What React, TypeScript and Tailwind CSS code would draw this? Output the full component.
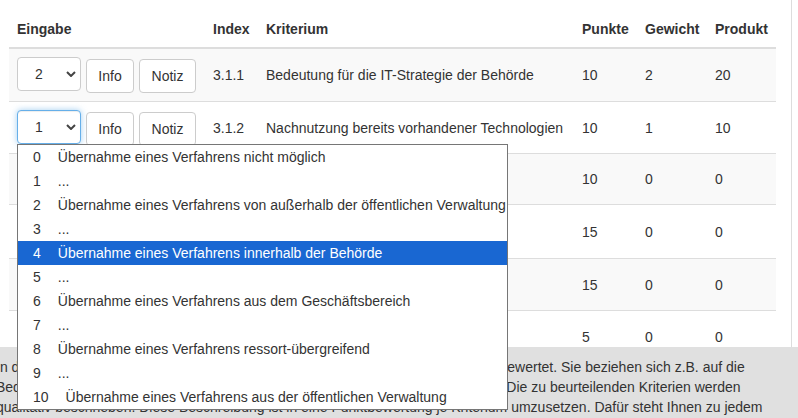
type Row = {
  value: number;
  index: string;
  label: string;
  points: number;
  height: string;
};

const rows: Row[] = [
  { value: 2, index: "3.1.1", label: "Bedeutung für die IT-Strategie der Behörde", points: 10, height: "h-[52px]" },
  { value: 1, index: "3.1.2", label: "Nachnutzung bereits vorhandener Technologien", points: 10, height: "h-[52px]" },
  { value: 0, index: "3.1.3", label: "Nachnutzbarkeit des Verfahrens", points: 10, height: "h-[51px]" },
  { value: 0, index: "3.1.4", label: "Verwendung offener Standards", points: 15, height: "h-[54px]" },
  { value: 0, index: "3.1.5", label: "Offene Schnittstellen", points: 15, height: "h-[52px]" },
  { value: 0, index: "3.1.6", label: "Interoperabilität", points: 5, height: "h-[52px]" },
];

const options = [
  "Übernahme eines Verfahrens nicht möglich",
  "...",
  "Übernahme eines Verfahrens von außerhalb der öffentlichen Verwaltung",
  "...",
  "Übernahme eines Verfahrens innerhalb der Behörde",
  "...",
  "Übernahme eines Verfahrens aus dem Geschäftsbereich",
  "...",
  "Übernahme eines Verfahrens ressort-übergreifend",
  "...",
  "Übernahme eines Verfahrens aus der öffentlichen Verwaltung",
];

const cols = "grid grid-cols-[196px_53px_316px_63px_70px_69px] items-center";

function Chevron() {
  return (
    <svg width="10" height="6" viewBox="0 0 10 6" className="shrink-0">
      <polyline points="1,1 5,5 9,1" fill="none" stroke="#444" strokeWidth="2" />
    </svg>
  );
}

function ValueSelect({ value, open }: { value: number; open?: boolean }) {
  return (
    <div className="relative">
      <div
        className={
          open
            ? "flex h-[34px] w-[64px] items-center justify-between rounded-[4px] border border-[#66afe9] bg-white pl-[17px] pr-[4px] shadow-[inset_0_1px_1px_rgba(0,0,0,0.075),0_0_6px_rgba(102,175,233,0.6)]"
            : "flex h-[34px] w-[64px] items-center justify-between rounded-[4px] border border-[#ccc] bg-white pl-[17px] pr-[4px]"
        }
      >
        <span>{value}</span>
        <Chevron />
      </div>
      {open && (
        <ul className="absolute left-0 top-[34px] z-20 w-[491px] border border-[#767676] bg-white">
          {options.map((text, i) => (
            <li
              key={i}
              className={
                i === 4
                  ? "flex h-[24px] items-center bg-[#1967d2] pl-[15px] text-white"
                  : "flex h-[24px] items-center pl-[15px] text-[#333]"
              }
            >
              <span>{i}</span>
              <span className="ml-[17px] whitespace-nowrap">{text}</span>
            </li>
          ))}
        </ul>
      )}
    </div>
  );
}

export default function App() {
  return (
    <div className="flex h-screen w-[798px] flex-col overflow-hidden bg-white font-['Liberation_Sans',Arial,sans-serif] text-[14px] leading-[20px] text-[#333]">
      {/* Kriterien table */}
      <div className="h-[347px] w-[792px] shrink-0 border-r border-[#ddd] pl-[9px] pr-[15px] pt-[11px]">
        <div className={`${cols} h-[38px] border-b-2 border-[#ddd] font-bold`}>
          <div className="px-[8px]">Eingabe</div>
          <div className="px-[8px]">Index</div>
          <div className="px-[8px]">Kriterium</div>
          <div className="px-[8px]">Punkte</div>
          <div className="px-[8px]">Gewicht</div>
          <div className="px-[8px]">Produkt</div>
        </div>
        {rows.map((row, i) => (
          <div
            key={row.index}
            className={`${cols} ${row.height} ${i > 0 ? "border-t border-[#ddd]" : ""} ${i % 2 === 0 ? "bg-[#f9f9f9]" : "bg-white"}`}
          >
            <div className="flex items-start gap-[5px] px-[8px]">
              <ValueSelect value={row.value} open={i === 1} />
              <button className="mt-[2px] flex h-[34px] w-[48px] items-center justify-center rounded-[4px] border border-[#ccc] bg-white">
                Info
              </button>
              <button className="mt-[2px] flex h-[34px] w-[57px] items-center justify-center rounded-[4px] border border-[#ccc] bg-white">
                Notiz
              </button>
            </div>
            <div className="px-[8px]">{row.index}</div>
            <div className="px-[8px]">{row.label}</div>
            <div className="px-[8px]">{row.points}</div>
            <div className="px-[8px]">{row.value}</div>
            <div className="px-[8px]">{row.points * row.value}</div>
          </div>
        ))}
      </div>

      {/* Erläuterung */}
      <div className="relative z-10 flex-1 bg-[#e0e0e0] pt-[10px]">
        <p className="-ml-[4px] whitespace-nowrap">
          In diesem Abschnitt werden die Kriterien zur Nachnutzung nach festen Vorgaben bewertet. Sie beziehen sich z.B. auf die
          <br />
          Bedeutung des Verfahrens für die Behörde und bereits vorhandene Technologien. Die zu beurteilenden Kriterien werden
          <br />
          qualitativ beschrieben. Diese Beschreibung ist in eine Punktbewertung je Kriterium umzusetzen. Dafür steht Ihnen zu jedem
        </p>
      </div>
    </div>
  );
}
